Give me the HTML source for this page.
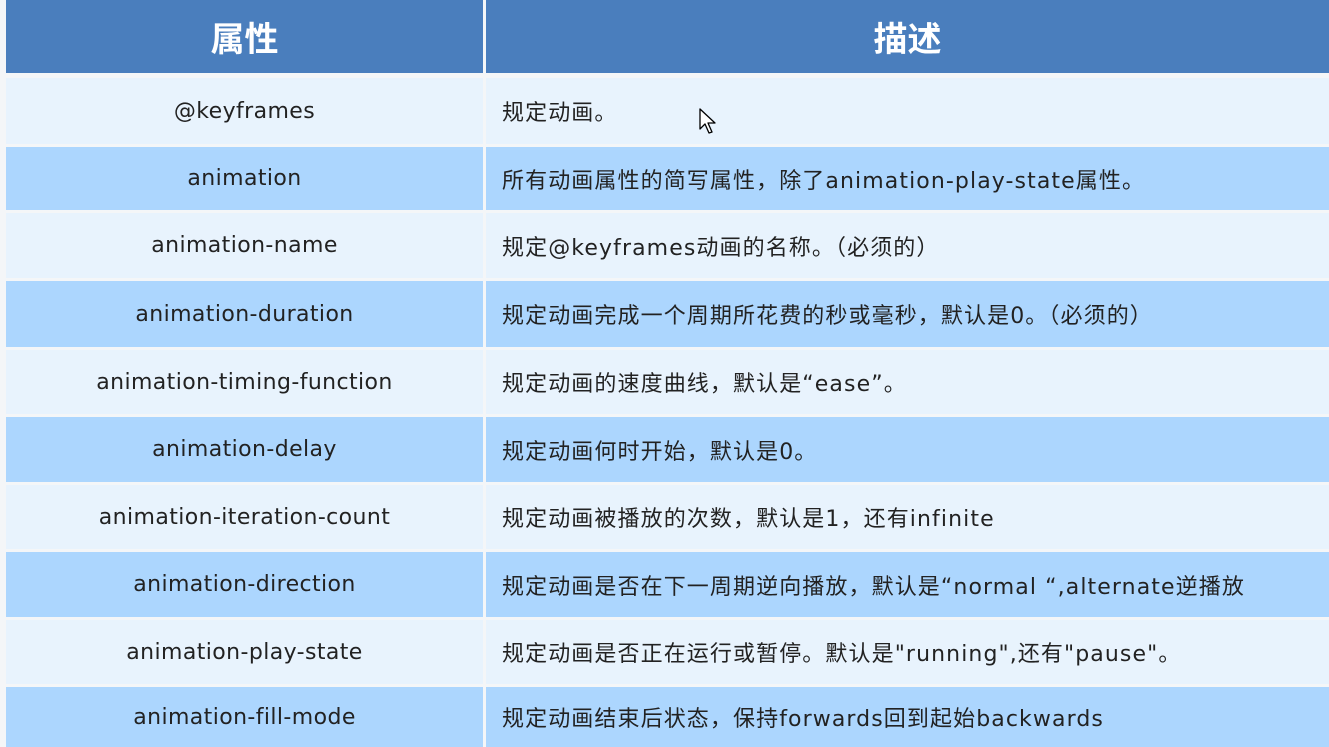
<!DOCTYPE html>
<html><head><meta charset="utf-8"><style>
body{margin:0;width:1329px;height:744px;overflow:hidden;background:#f4f6f8;font-family:"DejaVu Sans","Noto Sans CJK SC",sans-serif;}
.t{position:absolute;left:6px;top:0;width:1323px;}
.r{position:absolute;left:0;height:64px;width:1323px;}
.c1,.c2{position:absolute;top:0;height:100%;display:flex;align-items:center;font-size:22px;color:#222;white-space:nowrap;}
.c1{left:0;width:477px;justify-content:center;letter-spacing:0.4px;}
.c2{left:480px;right:0;padding-left:16px;box-sizing:border-box;letter-spacing:1.1px;}
.h .c1,.h .c2{background:#4a7ebd;color:#fff;font-weight:bold;font-size:34px;justify-content:center;padding:0;font-family:"Noto Sans CJK SC",sans-serif;letter-spacing:0;}
.o .c1,.o .c2{background:#e8f3fd;}
.e .c1,.e .c2{background:#acd6fe;}
</style></head><body><div class="t">
<div class="r h" style="top:0;height:73px"><div class="c1">属性</div><div class="c2">描述</div></div>
<div class="r o" style="top:78px;height:66px"><div class="c1">@keyframes</div><div class="c2">规定动画。</div></div>
<div class="r e" style="top:147px;height:63px"><div class="c1">animation</div><div class="c2">所有动画属性的简写属性，除了animation-play-state属性。</div></div>
<div class="r o" style="top:213px;height:65px"><div class="c1">animation-name</div><div class="c2">规定@keyframes动画的名称。（必须的）</div></div>
<div class="r e" style="top:281px;height:66px"><div class="c1">animation-duration</div><div class="c2">规定动画完成一个周期所花费的秒或毫秒，默认是0。（必须的）</div></div>
<div class="r o" style="top:350px;height:64px"><div class="c1">animation-timing-function</div><div class="c2">规定动画的速度曲线，默认是“ease”。</div></div>
<div class="r e" style="top:417px;height:65px"><div class="c1">animation-delay</div><div class="c2">规定动画何时开始，默认是0。</div></div>
<div class="r o" style="top:485px;height:64px"><div class="c1">animation-iteration-count</div><div class="c2">规定动画被播放的次数，默认是1，还有infinite</div></div>
<div class="r e" style="top:552px;height:65px"><div class="c1">animation-direction</div><div class="c2">规定动画是否在下一周期逆向播放，默认是“normal “,alternate逆播放</div></div>
<div class="r o" style="top:620px;height:64px"><div class="c1">animation-play-state</div><div class="c2">规定动画是否正在运行或暂停。默认是"running",还有"pause"。</div></div>
<div class="r e" style="top:687px;height:60px"><div class="c1">animation-fill-mode</div><div class="c2">规定动画结束后状态，保持forwards回到起始backwards</div></div>
</div>
<svg style="position:absolute;left:699px;top:108px" width="18" height="28" viewBox="0 0 18 28"><path d="M1 1 L1 21 L6 16 L10 25 L13 24 L9 15 L16 15 Z" fill="#fff" stroke="#000" stroke-width="1.3" stroke-linejoin="round"/></svg>
</body></html>
